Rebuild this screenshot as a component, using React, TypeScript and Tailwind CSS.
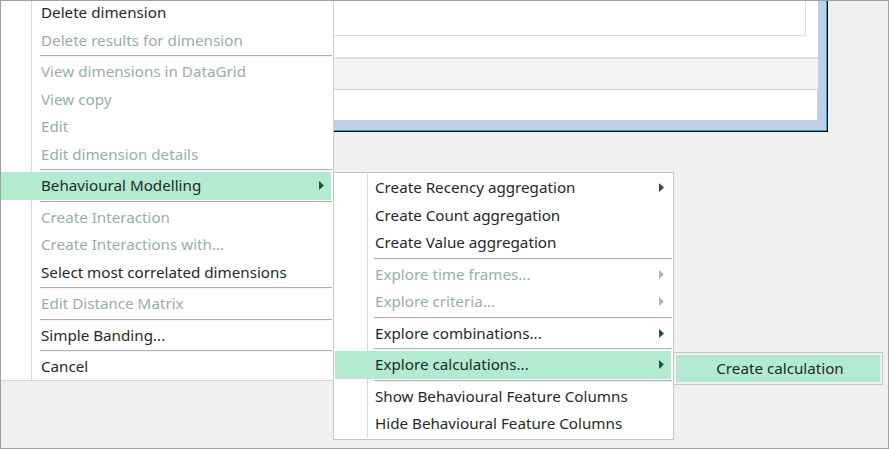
import React from "react";

const FONT = { fontFamily: '"Noto Sans", "Open Sans", sans-serif' };

function Arrow({ disabled }: { disabled?: boolean }) {
  return (
    <svg width="5" height="9" viewBox="0 0 5 9" className="shrink-0">
      <polygon points="0,0 5,4.5 0,9" fill={disabled ? "#a9bab3" : "#2c4d3b"} />
    </svg>
  );
}

type Item =
  | { sep: true }
  | { label: string; disabled?: boolean; arrow?: boolean; active?: boolean };

function Menu({
  items,
  gutterClass,
}: {
  items: Item[];
  gutterClass: string;
}) {
  return (
    <div className="relative flex flex-col">
      <div className={`absolute top-0 bottom-0 w-px bg-[#d7d7d7] ${gutterClass}`} />
      {items.map((it, i) =>
        "sep" in it ? (
          <div key={i} className="h-[4px] flex items-center pl-[39px] pr-px">
            <div className="w-full h-[2px] border-t border-[#b0b0b0] border-b border-b-[#f3f3f3]" />
          </div>
        ) : (
          <div
            key={i}
            className={`relative h-[27.5px] flex items-center pl-[40px] mr-[2px] ${
              it.active ? "bg-[#b3ebd1]" : ""
            } ${it.disabled ? "text-[#98afa7]" : "text-[#1f2a26]"}`}
          >
            <span className="flex-1 whitespace-nowrap">{it.label}</span>
            {it.arrow && (
              <span className="flex items-center pr-[7px]">
                <Arrow disabled={it.disabled} />
              </span>
            )}
          </div>
        )
      )}
    </div>
  );
}

const mainItems: Item[] = [
  { label: "Delete dimension" },
  { label: "Delete results for dimension", disabled: true },
  { sep: true },
  { label: "View dimensions in DataGrid", disabled: true },
  { label: "View copy", disabled: true },
  { label: "Edit", disabled: true },
  { label: "Edit dimension details", disabled: true },
  { sep: true },
  { label: "Behavioural Modelling", arrow: true, active: true },
  { sep: true },
  { label: "Create Interaction", disabled: true },
  { label: "Create Interactions with...", disabled: true },
  { label: "Select most correlated dimensions" },
  { sep: true },
  { label: "Edit Distance Matrix", disabled: true },
  { sep: true },
  { label: "Simple Banding..." },
  { sep: true },
  { label: "Cancel" },
];

const subItems: Item[] = [
  { label: "Create Recency aggregation", arrow: true },
  { label: "Create Count aggregation" },
  { label: "Create Value aggregation" },
  { sep: true },
  { label: "Explore time frames...", arrow: true, disabled: true },
  { label: "Explore criteria...", arrow: true, disabled: true },
  { sep: true },
  { label: "Explore combinations...", arrow: true },
  { sep: true },
  { label: "Explore calculations...", arrow: true, active: true },
  { sep: true },
  { label: "Show Behavioural Feature Columns" },
  { label: "Hide Behavioural Feature Columns" },
];

export default function App() {
  return (
    <div
      className="relative w-[889px] h-[449px] overflow-hidden bg-[#f0f0f0] border border-[#a0a0a0] text-[15.2px]"
      style={FONT}
    >
      {/* background dialog window */}
      <div className="w-[828px] h-[132px] -mt-px -ml-px border-r border-b border-black">
        <div className="h-full border-r border-b border-[#2aa9cf] bg-[#bbd0e9] pr-[8px] pb-[9px]">
          <div className="h-full bg-white flex flex-col">
            <div className="h-[57px] flex flex-col">
              <div className="h-[36px] w-[806px] border-r border-b border-[#dcdcdc]" />
            </div>
            <div className="h-[2px] bg-[#dedede]" />
            <div className="h-[30px] bg-[#f4f4f4]" />
            <div className="flex-1 border border-[#cfcfcf] bg-white" />
          </div>
        </div>
      </div>

      {/* main context menu */}
      <div className="absolute left-0 top-[-2px] w-[333px] h-[382px] bg-white border-r border-[#cfcfcf] border-b border-b-[#d6d6d6]">
        <Menu items={mainItems} gutterClass="left-[30px]" />
      </div>

      {/* submenu */}
      <div className="absolute left-[332px] top-[171px] w-[341px] h-[268px] bg-white border border-[#c6c6c6] pt-[1px] pl-px">
        <Menu items={subItems} gutterClass="left-[32px]" />
      </div>

      {/* third level */}
      <div className="absolute left-[672px] top-[351px] w-[210px] h-[33px] bg-[#f0f0f0] border border-[#c6c6c6] p-[2px]">
        <div className="h-full bg-[#b3ebd1] flex items-center justify-center text-[#1f2a26] pl-[4px]">
          Create calculation
        </div>
      </div>
    </div>
  );
}
